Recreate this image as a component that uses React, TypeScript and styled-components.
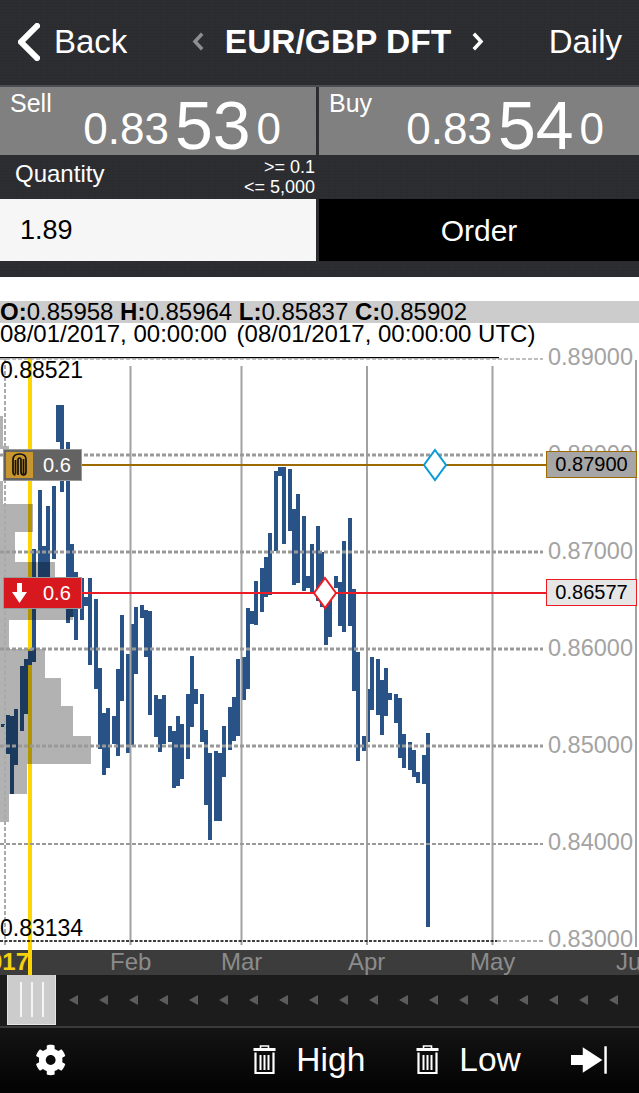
import styled, { createGlobalStyle } from 'styled-components'
import { FaCog } from 'react-icons/fa'

const PLOT_TOP = 357
const PLOT_HEIGHT = 593

// [x, top, bottom] in page pixels, one entry per daily bar
const bars: [number, number, number][] = [
  [1, 724, 727], [6, 715, 754], [10, 716, 794], [14, 709, 765], [20, 666, 731], [24, 659, 714], [28, 651, 665], [32, 549, 662],
  [38, 490, 590], [42, 546, 590], [46, 506, 590], [52, 486, 559], [56, 405, 442], [60, 405, 492], [66, 442, 623], [70, 544, 617],
  [74, 572, 640], [80, 578, 620], [84, 597, 606], [88, 578, 665], [94, 599, 689], [98, 668, 749], [102, 713, 775], [106, 708, 768],
  [112, 716, 744], [116, 669, 756], [120, 615, 701], [126, 654, 753], [130, 624, 745], [134, 607, 674], [140, 605, 618], [144, 610, 657],
  [148, 611, 715], [154, 695, 737], [158, 699, 752], [162, 695, 744], [168, 726, 742], [172, 731, 788], [176, 716, 786], [180, 724, 779],
  [186, 694, 759], [190, 656, 727], [194, 689, 704], [200, 694, 742], [204, 730, 805], [208, 753, 840], [214, 751, 821], [218, 753, 821],
  [222, 726, 777], [228, 707, 750], [232, 697, 741], [236, 659, 736], [242, 657, 700], [246, 608, 689], [250, 611, 624], [254, 581, 625],
  [260, 568, 612], [264, 557, 597], [268, 533, 595], [274, 471, 551], [278, 467, 476], [282, 467, 544], [288, 469, 531], [292, 509, 585],
  [296, 494, 583], [302, 516, 591], [306, 576, 588], [310, 544, 592], [316, 526, 601], [320, 552, 607], [324, 595, 645], [328, 597, 637],
  [334, 576, 588], [338, 582, 626], [342, 541, 632], [348, 518, 626], [352, 589, 691], [356, 652, 761], [362, 736, 751], [366, 689, 742],
  [370, 657, 710], [376, 659, 715], [380, 680, 735], [384, 668, 716], [388, 693, 700], [394, 694, 723], [398, 698, 758], [402, 734, 768],
  [408, 742, 770], [412, 750, 777], [416, 772, 783], [422, 755, 784], [426, 733, 927],
]

// [width, top, bottom] of the volume profile, all from the left edge
const profile: [number, number, number][] = [
  [3, 416, 446], [9, 446, 449], [3, 481, 504], [33, 504, 532], [15, 532, 562], [55, 562, 578], [73, 578, 620], [9, 620, 649],
  [45, 649, 678], [61, 678, 706], [73, 706, 736], [91, 736, 764], [27, 764, 794], [9, 794, 822],
]

const gridRows = [
  { y: 455, w: 3 }, { y: 552, w: 3 }, { y: 649, w: 3 }, { y: 746, w: 3 }, { y: 844, w: 2 },
]
const gridColumns = [130.5, 241.5, 367, 492.5]

const axisLabels = [
  { text: '0.89000', base: 366 }, { text: '0.88000', base: 463 }, { text: '0.87000', base: 560 }, { text: '0.86000', base: 657 },
  { text: '0.85000', base: 754 }, { text: '0.84000', base: 851 }, { text: '0.83000', base: 948 },
]

const months = [
  { text: 'Feb', x: 110 }, { text: 'Mar', x: 221 }, { text: 'Apr', x: 348 }, { text: 'May', x: 470 }, { text: 'Jun', x: 616 },
]

const GlobalStyle = createGlobalStyle`
  html, body {
    margin: 0;
    padding: 0;
    background: #000;
  }
  body {
    font-family: "Liberation Sans", Arial, sans-serif;
  }
`

const Screen = styled.div`
  display: flex;
  flex-direction: column;
  width: 639px;
  height: 1093px;
  overflow: hidden;
  background: #fff;
`

const TopPanel = styled.div`
  height: 277px;
  color: #fff;
  background-color: #2c2d31;
  background-image: repeating-linear-gradient(90deg, rgb(255 255 255 / 1%) 0 1px, transparent 1px 3px),
    repeating-linear-gradient(0deg, rgb(0 0 0 / 5%) 0 1px, transparent 1px 3px);
`

const Header = styled.header`
  display: flex;
  align-items: center;
  justify-content: space-between;
  height: 85px;
  padding: 0 17px 2px 18px;
  box-sizing: border-box;
  font-size: 33px;
  line-height: 1;
`

const NavGroup = styled.div`
  display: flex;
  align-items: center;
`

const BackLabel = styled.span`
  margin-left: 14px;
`

const Title = styled.span`
  margin: 0 21px;
  font-size: 33.5px;
  font-weight: 700;
  white-space: nowrap;
`

const Quotes = styled.div`
  display: grid;
  grid-template-columns: 316px 320px;
  column-gap: 3px;
  height: 68px;
  border-top: 2px solid #4b4e53;
`

const QuoteCell = styled.div`
  display: flex;
  justify-content: space-between;
  padding: 4px 35px 4px 10px;
  background: #808080;
`

const QuoteLabel = styled.span`
  font-size: 25px;
  line-height: 1;
`

const Price = styled.div`
  display: flex;
  align-items: flex-end;
  align-self: flex-end;
  font-size: 44px;
  line-height: 1;
`

const BigDigits = styled.span`
  margin: 0 6px -8px;
  font-size: 68px;
  line-height: 1;
`

const QuantityRow = styled.div`
  display: flex;
  align-items: center;
  justify-content: space-between;
  box-sizing: border-box;
  width: 316px;
  height: 44px;
  padding: 0 1px 0 15px;
`

const QuantityLabel = styled.span`
  padding-bottom: 6px;
  font-size: 24px;
  line-height: 1;
`

const Limits = styled.div`
  font-size: 18px;
  line-height: 20px;
  text-align: right;
`

const EntryRow = styled.div`
  display: grid;
  grid-template-columns: 316px 320px;
  column-gap: 3px;
  height: 62px;
`

const QuantityInput = styled.div`
  display: flex;
  align-items: center;
  padding-left: 20px;
  font-size: 27px;
  color: #000;
  background: #f6f6f6;
`

const OrderButton = styled.button`
  padding: 2px 0 0;
  font-family: inherit;
  font-size: 30px;
  color: #fff;
  background: #000;
  border: 0;
`

const ChartPanel = styled.section`
  flex: none;
  color: #000;
  background: #fff;
`

const Info = styled.div`
  box-sizing: border-box;
  height: 80px;
  padding-top: 24px;
  font-size: 24px;
  line-height: 22px;
  white-space: nowrap;
`

const InfoBar = styled.div`
  background: #ccc;
`

const UtcTime = styled.span`
  margin-left: 3px;
`

const Plot = styled.div`
  position: relative;
  height: ${PLOT_HEIGHT}px;
`

const PlotDrawing = styled.svg`
  position: absolute;
  inset: 0;
`

const Extreme = styled.span<{ $base: number }>`
  position: absolute;
  left: 0;
  top: ${({ $base }) => $base - PLOT_TOP - 20}px;
  font-size: 23px;
  line-height: 1;
`

const AxisLabel = styled.span<{ $base: number }>`
  position: absolute;
  left: 548px;
  top: ${({ $base }) => $base - PLOT_TOP - 20}px;
  font-size: 23.5px;
  line-height: 1;
  color: #a3a3a3;
`

const PriceTag = styled.span<{ $top: number; $bg: string; $line: string }>`
  position: absolute;
  left: 546px;
  top: ${({ $top }) => $top - PLOT_TOP}px;
  box-sizing: border-box;
  width: 91px;
  height: 27px;
  font-size: 20px;
  line-height: 25px;
  text-align: center;
  background: ${({ $bg }) => $bg};
  border: 1px solid ${({ $line }) => $line};
`

const OrderTag = styled.div<{ $top: number; $bg: string }>`
  position: absolute;
  left: 3px;
  top: ${({ $top }) => $top - PLOT_TOP}px;
  display: flex;
  align-items: center;
  box-sizing: border-box;
  width: 79px;
  height: 32px;
  padding-left: 2px;
  font-size: 20px;
  color: #fff;
  background: ${({ $bg }) => $bg};
  border: 1px solid #999;
`

const TagIcon = styled.span<{ $bg?: string }>`
  display: flex;
  align-items: center;
  justify-content: center;
  width: 27px;
  height: 26px;
  background: ${({ $bg }) => $bg ?? 'transparent'};
`

const TagValue = styled.span`
  margin-left: 10px;
`

const TimeBar = styled.div`
  position: relative;
  flex: none;
  height: 25px;
  overflow: hidden;
  font-size: 24px;
  line-height: 23px;
  color: #8c8c8c;
  background: #3c3c3c;
`

const Month = styled.span<{ $x: number }>`
  position: absolute;
  left: ${({ $x }) => $x}px;
  top: 0;
`

const YearLabel = styled.span`
  position: absolute;
  right: 610px;
  top: 0;
  font-weight: 700;
  color: #f5cf10;
`

const TimeCursor = styled.span`
  position: absolute;
  left: 28px;
  top: 0;
  width: 4px;
  height: 25px;
  background: #ffd500;
`

const Scroller = styled.div`
  display: flex;
  flex: none;
  align-items: center;
  box-sizing: border-box;
  height: 53px;
  padding: 0 0 2px 7px;
  background: #1c1c1c;
  border-bottom: 2px solid #3a3a3a;
`

const Handle = styled.div`
  display: flex;
  align-items: center;
  justify-content: center;
  gap: 9px;
  box-sizing: border-box;
  width: 49px;
  height: 51px;
  background: #ccc;
  border: 1px solid #e4e4e4;
`

const Grip = styled.span`
  width: 2px;
  height: 35px;
  background: #f4f4f4;
`

const Arrows = styled.div`
  display: flex;
  gap: 21px;
  margin-left: 13px;
`

const ArrowMark = styled.span`
  width: 0;
  height: 0;
  border-top: 5px solid transparent;
  border-bottom: 5px solid transparent;
  border-right: 9px solid #5c5c5c;
`

const Toolbar = styled.footer`
  display: flex;
  flex: 1;
  align-items: center;
  padding: 0 32px 2px 35px;
  font-size: 33.5px;
  color: #fff;
  background: linear-gradient(#141414, #020202);
`

const ClearButton = styled.div<{ $gap: number; $lead: number }>`
  display: flex;
  align-items: center;
  gap: ${({ $gap }) => $gap}px;
  margin-left: ${({ $lead }) => $lead}px;
`

const EndMark = styled.svg`
  margin-left: 50px;
`

const Trash = () => (
  <svg width="23" height="29" viewBox="0 0 23 29" fill="none">
    <path d="M7.5 3V1h8v2" stroke="#fff" strokeWidth="1.6" />
    <rect x="0.5" y="3" width="22" height="3" fill="#fff" />
    <path d="M2.5 7.5v20.500h18V7.500" stroke="#fff" strokeWidth="2.2" />
    <path d="M7.5 10v15M11.5 10v15M15.500 10v15" stroke="#fff" strokeWidth="2" />
  </svg>
)

const Clip = () => (
  <svg width="15" height="24" viewBox="0 0 15 24" fill="none" stroke="#111" strokeWidth="1.7">
    <path d="M3.500 22C1.800 22 1 20.500 1 18.500V6.500C1 3 3.500 1 7.500 1S14 3 14 6.500v12c0 2-1 3.500-2.500 3.500S9 20.500 9 18.500V7c0-1.300-.6-2-1.500-2S6 5.700 6 7v15" />
    <path d="M3.500 21V7M11.500 21V6" />
  </svg>
)

const PlotSvg = () => (
  <PlotDrawing width={639} height={PLOT_HEIGHT} viewBox={`0 ${PLOT_TOP} 639 ${PLOT_HEIGHT}`}>
    <rect x="28" y="357" width="4" height="593" fill="#ffd500" />
    {bars.map(([x, top, bottom]) => (
      <rect key={x} x={x} y={top} width="4" height={bottom - top} fill="#295287" />
    ))}
    {profile.map(([w, top, bottom]) => (
      <rect key={top} x="0" y={top} width={w} height={bottom - top} fill="rgb(0 0 0 / 30%)" />
    ))}
    {gridColumns.map((x) => (
      <line key={x} x1={x} x2={x} y1="366" y2="945" stroke="#a2a2a2" strokeWidth="2" />
    ))}
    <line x1="636" x2="636" y1="360" y2="947" stroke="#a2a2a2" strokeWidth="2" />
    <line x1="5" x2="5" y1="359" y2="945" stroke="#aaa" strokeWidth="2" strokeDasharray="4 2" />
    {gridRows.map(({ y, w }) => (
      <line key={y} x1="0" x2="543" y1={y} y2={y} stroke="#999" strokeWidth={w} strokeDasharray="4 2" />
    ))}
    <line x1="0" x2="499" y1="357.5" y2="357.5" stroke="#000" strokeWidth="1.6" />
    <line x1="0" x2="543" y1="359" y2="359" stroke="#aaa" strokeWidth="1.4" strokeDasharray="4 2" />
    <line x1="497" x2="543" y1="941" y2="941" stroke="#999" strokeWidth="1.5" strokeDasharray="4 2" />
    <line x1="0" x2="497" y1="941" y2="941" stroke="#000" strokeWidth="1.5" strokeDasharray="3 1.5" />
    <line x1="82" x2="546" y1="465" y2="465" stroke="#9c6a00" strokeWidth="2" />
    <line x1="82" x2="546" y1="593" y2="593" stroke="#ed1c24" strokeWidth="2" />
    <path d="M435 450l11 15-11 15-11-15z" fill="#fff" stroke="#0a9bd6" strokeWidth="2" />
    <path d="M325 578l11 15-11 15-11-15z" fill="#fff" stroke="#ed1c24" strokeWidth="2" />
  </PlotDrawing>
)

const Chevron = ({ points, width, height, stroke, strokeWidth }: { points: string; width: number; height: number; stroke: string; strokeWidth: number }) => (
  <svg width={width} height={height} viewBox={`0 0 ${width} ${height}`} fill="none">
    <polyline points={points} stroke={stroke} strokeWidth={strokeWidth} strokeLinecap="square" />
  </svg>
)

export default function App() {
  return (
    <Screen>
      <GlobalStyle />
      <TopPanel>
        <Header>
          <NavGroup>
            <Chevron points="19,3 3,19 19,35" width={22} height={38} stroke="#fff" strokeWidth={6} />
            <BackLabel>Back</BackLabel>
          </NavGroup>
          <NavGroup>
            <Chevron points="9,3 3,9.5 9,16" width={12} height={19} stroke="#8e8e8e" strokeWidth={3.5} />
            <Title>EUR/GBP DFT</Title>
            <Chevron points="3,3 9,9.5 3,16" width={12} height={19} stroke="#fff" strokeWidth={3.5} />
          </NavGroup>
          <span>Daily</span>
        </Header>
        <Quotes>
          <QuoteCell>
            <QuoteLabel>Sell</QuoteLabel>
            <Price>0.83<BigDigits>53</BigDigits>0</Price>
          </QuoteCell>
          <QuoteCell>
            <QuoteLabel>Buy</QuoteLabel>
            <Price>0.83<BigDigits>54</BigDigits>0</Price>
          </QuoteCell>
        </Quotes>
        <QuantityRow>
          <QuantityLabel>Quantity</QuantityLabel>
          <Limits>
            &gt;= 0.1<br />&lt;= 5,000
          </Limits>
        </QuantityRow>
        <EntryRow>
          <QuantityInput>1.89</QuantityInput>
          <OrderButton type="button">Order</OrderButton>
        </EntryRow>
      </TopPanel>
      <ChartPanel>
        <Info>
          <InfoBar>
            <b>O:</b>0.85958 <b>H:</b>0.85964 <b>L:</b>0.85837 <b>C:</b>0.85902
          </InfoBar>
          <div>08/01/2017, 00:00:00 <UtcTime>(08/01/2017, 00:00:00 UTC)</UtcTime></div>
        </Info>
        <Plot>
          <PlotSvg />
          <Extreme $base={379}>0.88521</Extreme>
          <Extreme $base={937}>0.83134</Extreme>
          {axisLabels.map(({ text, base }) => (
            <AxisLabel key={text} $base={base}>{text}</AxisLabel>
          ))}
          <PriceTag $top={451} $bg="#a6a6a6" $line="#9c6a00">0.87900</PriceTag>
          <PriceTag $top={579} $bg="#e6e6e6" $line="#ed1c24">0.86577</PriceTag>
          <OrderTag $top={449} $bg="#636363">
            <TagIcon $bg="#c8962d"><Clip /></TagIcon>
            <TagValue>0.6</TagValue>
          </OrderTag>
          <OrderTag $top={577} $bg="#d7191f">
            <TagIcon>
              <svg width="15" height="20" viewBox="0 0 15 20">
                <path d="M5 0h5v9h5l-7.500 11L0 9h5z" fill="#fff" />
              </svg>
            </TagIcon>
            <TagValue>0.6</TagValue>
          </OrderTag>
        </Plot>
      </ChartPanel>
      <TimeBar>
        <YearLabel>2017</YearLabel>
        <TimeCursor />
        {months.map(({ text, x }) => (
          <Month key={text} $x={x}>{text}</Month>
        ))}
      </TimeBar>
      <Scroller>
        <Handle>
          <Grip />
          <Grip />
          <Grip />
        </Handle>
        <Arrows>
          {Array.from({ length: 19 }, (_, i) => (
            <ArrowMark key={i} />
          ))}
        </Arrows>
      </Scroller>
      <Toolbar>
        <FaCog size={32} color="#fff" />
        <ClearButton $gap={20} $lead={187}>
          <Trash />
          <span>High</span>
        </ClearButton>
        <ClearButton $gap={20} $lead={51}>
          <Trash />
          <span>Low</span>
        </ClearButton>
        <EndMark width="37" height="28" viewBox="0 0 37 28">
          <path d="M0 9h12V1l20 13-20 13v-8H0z" fill="#fff" />
          <rect x="34" y="0" width="2.500" height="28" fill="#fff" />
        </EndMark>
      </Toolbar>
    </Screen>
  )
}
